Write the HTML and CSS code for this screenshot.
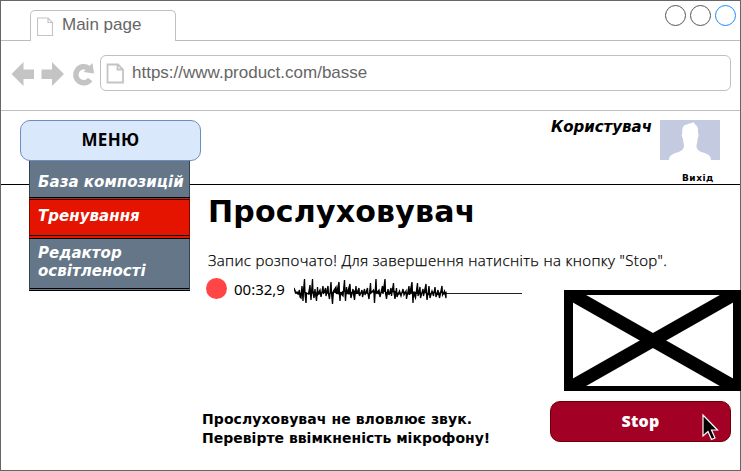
FILE: index.html
```html
<!DOCTYPE html>
<html lang="uk">
<head>
<meta charset="utf-8">
<title>Main page</title>
<link rel="stylesheet" href="styles.css">
</head>
<body>
<div class="window">
  <div class="tabs">
    <div class="tab">
      <svg class="tab-doc" width="17" height="20" viewBox="0 0 17 20"><path d="M.5 1h10.500l4.500 4.500V18.500H.5zM11 1v4.500H15.500" fill="none" stroke="#c4c4c4" stroke-width="1.100"/></svg>
      <span class="tab-title">Main page</span>
    </div>
    <div class="controls"><i class="dot"></i><i class="dot"></i><i class="dot blue"></i></div>
  </div>
  <div class="toolbar">
    <svg class="nav" width="84" height="26" viewBox="0 0 84 26"><g fill="#c4c4c4"><path d="M-.5 13L11.500 1V8.500H22V18H11.500V25z"/><path d="M52 13L40 1V8.500H29.500V18H40V25z"/></g><path d="M78.200 18.500A8 8 0 1 1 76.500 7.300" fill="none" stroke="#c4c4c4" stroke-width="5.500"/><path d="M80.500 2L82 12.500L71.500 11z" fill="#c4c4c4"/></svg>
    <div class="address">
      <svg width="19" height="22" viewBox="0 0 19 22"><path d="M1.500 1.500h10.500l5 5V19.500H1.500zM11.500 1.500v5H17" fill="none" stroke="#c4c4c4" stroke-width="1.800"/></svg>
      <span class="url">https://www.product.com/basse</span>
    </div>
  </div>
  <header class="header">
    <nav class="menu">
      <div class="menu-button"><span>МЕНЮ</span></div>
      <ul class="menu-list">
        <li class="item first"><span>База композицій</span></li>
        <li class="item active"><span>Тренування</span></li>
        <li class="item last"><span>Редактор<br>освітленості</span></li>
      </ul>
    </nav>
    <div class="user">Користувач</div>
    <div class="account">
      <svg width="60" height="40" viewBox="0 0 60 40"><path fill="#c4cbe0" d="M0 0h60v40H0z"/><path fill="#fff" d="M9 40C9 36 12 34 17 32.500C22 31 24 29 24 25.500C23.500 22 23 20 22.700 18C21.500 17 21.500 14 22.300 13C22 8 23 5 27 4.500C29 3 32 3 34 2.200L34.500 4C37 5 38.500 8 38 13C39 14 38.500 17 37.700 18C37.500 21 37 23 36.500 25.500C36.500 29 38 31 43 32.500C48 34 51 36 51 40z"/></svg>
      <a class="logout">Вихід</a>
    </div>
  </header>
  <main class="main">
    <h1 class="title"><span>Прослуховувач</span></h1>
    <p class="hint"><span>Запис розпочато! Для завершення натисніть на кнопку "Stop".</span></p>
    <section class="left">
      <div class="recorder">
        <i class="rec"></i>
        <span class="time">00:32,9</span>
        <svg class="wave" width="228" height="30" viewBox="0 0 228 30"><path d="M152 16.500h76" stroke="#222"/><path stroke="#000" stroke-width="1.300" d="M0 11L1.500 16L3 15L4 17L5.500 13L6 20L7 21L8 9L8.500 17L9 24L9.500 14L10.500 2L11 17L12 26L12.500 16L14.500 17L16 8L16.500 16L17 23L18.500 2L19 16L20 21L21 12L21.500 17L22.500 24L23.500 10L24 17L26 13L27 20L29 9L29.500 17L31.500 11L32 19L34 9L34.500 17L35.500 22L37 5L37.500 16L38.500 27L39.500 14L42 10L42.500 17L45 5L45.500 17L46 24L46.500 16L49 19L50.500 3L51 16L51.500 24L52.500 10L53 17L56 7L56.500 17L57 21L59 12L59.500 17L60.500 23L62 9L62.500 17L65 11L65.500 19L68 13L68.500 20L70.500 12L71 18L73.500 11L74 17L75 22L76.500 6L77 16L79.500 13L80 17L80.500 26L82 2L82.500 16L85 13L86 20L88.500 9L89 17L91 2L91.500 16L92.500 22L94 12L95 18L97 11L97.500 19L99.500 6L100 16L101 22L102.500 11L103 20L105.500 14L107 19L109 12L110 18L112 14L112.500 22L115 9L115.500 18L118 5L118.500 17L119 26L119.500 16L121.500 21L123.500 6L124 19L126 10L126.500 21L129 12L129.500 19L132 7L132.500 17L133 23L135 9L136 21L138 14L139.500 19L141 10L142 20L144 13L145.500 21L148 9L148.500 18L150.500 14L152 21V15.500L150 17L147 15L144 17.500L140 15L135 17.500L130 15L125 17L120 15L115 17L110 15L105 17L100 14L95 17L90 14L85 17L80 14L75 17L70 15L65 17L60 14L55 17L50 14L45 17L40 15L35 16.500L30 15L25 17L20 15L15 17L10 15L5 17L2 16z"/></svg>
      </div>
      <p class="warning"><span class="w1">Прослуховувач не вловлює звук.</span><br><span>Перевірте ввімкненість мікрофону!</span></p>
    </section>
    <section class="right">
      <svg class="placeholder" width="177" height="101" viewBox="0 0 177 101"><path fill-rule="evenodd" d="M0 0h177v101H0zM9 5v91h160V5z"/><path d="M9 5L169 96M169 5L9 96" stroke="#000" stroke-width="13"/></svg>
      <div class="stop"><span>Stop</span>
        <svg class="cursor" width="19" height="29" viewBox="0 0 19 29"><path d="M2 2V23L7 18.500L10.500 26.500L14 25L10.500 17H16.500z" fill="#000" stroke="#fff" stroke-width="1.200"/></svg>
      </div>
    </section>
  </main>
</div>
</body>
</html>
```
FILE: styles.css
```css
* { box-sizing: border-box; }
body { margin: 0; background: #fff; overflow: hidden; }
.window { width: 741px; height: 471px; border: 1px solid #666; font-family: "DejaVu Sans", sans-serif; color: #000; }
.window svg { display: block; flex: none; }
.window span, .user, .logout { white-space: nowrap; }
.tabs { height: 40px; display: flex; justify-content: space-between; padding: 9px 4px 0 29px; border-bottom: 1px solid #bcbcbc; }
.tab { width: 146px; height: 31px; border: 1px solid #c0c0c0; border-bottom: 0; border-radius: 5px 5px 0 0; background: #fff; display: flex; padding: 6px 0 0 6px; gap: 8px; }
.tab-title, .url { font: 17px/18px "Liberation Sans", sans-serif; color: #666; }
.tab-title { margin-top: -1px; }
.url { margin-top: 1px; }
.controls { display: flex; gap: 4px; margin-top: -5px; }
.dot { width: 21px; height: 21px; border: 1px solid #555; border-radius: 50%; }
.dot.blue { border-color: #1a8cff; }
.toolbar { height: 70px; display: flex; padding: 14px 9px 0 11px; border-bottom: 1px solid #c0c0c0; }
.nav { margin: 6px 4px 0 0; overflow: visible; }
.address { flex: 1; height: 36px; border: 1px solid #c0c0c0; border-radius: 6px; display: flex; padding: 7px 0 0 5px; gap: 7px; }
.header { position: relative; height: 74px; border-bottom: 1px solid #000; display: flex; justify-content: flex-end; padding-right: 20px; }
.menu { position: absolute; left: 19px; top: 9px; width: 181px; }
.menu-button { position: relative; z-index: 1; height: 41px; border: 1px solid #6c8ebf; border-radius: 10px; background: #dae8fc; text-align: center; font: bold 17px/38px "Open Sans", sans-serif; letter-spacing: .3px; }
.menu-list { list-style: none; margin: -1px 0 0 9px; padding: 0; width: 161px; font: italic bold 15px/18px "DejaVu Sans", sans-serif; letter-spacing: .05px; color: #fff; }
.item { border: 1px solid #314354; background: #647687; padding-left: 8px; }
.first { height: 37px; padding-top: 12px; border-bottom: 0; }
.active { height: 42px; padding-top: 7px; background: #e51400; border: 1px solid #7a0b00; border-top: 3px double #000; border-bottom: 4px double #000; }
.last { height: 52px; padding-top: 5px; border-top: 0; border-bottom: 3px double #000; }
.user { font: italic bold 15px/18px "DejaVu Sans", sans-serif; margin: 7px 8px 0 0; }
.account { width: 60px; padding-top: 9px; }
.logout { display: block; margin: 12px 0 0 22px; font: bold 9px/12px "DejaVu Sans", sans-serif; letter-spacing: .5px; }
.main { display: grid; grid-template-columns: 362px 177px; padding-left: 201px; width: 741px; }
.title, .hint { grid-column: 1 / 3; margin: 0; padding-left: 6px; }
.title { height: 65px; padding-top: 9px; font: bold 30px/36px "DejaVu Sans", sans-serif; letter-spacing: .2px; }
.hint { height: 27px; font: 300 15px/20px "Open Sans", sans-serif; letter-spacing: .36px; -webkit-text-stroke: .25px #000; }
.recorder { display: flex; height: 30px; padding-left: 4px; }
.rec { width: 21px; height: 21px; border-radius: 50%; background: #ff4545; margin-top: 1px; }
.time { width: 59px; margin-left: 7px; font: 15px/24px "Noto Sans", sans-serif; }
.wave { margin-left: 1px; }
.warning { margin: 103px 0 0; font: bold 14px/19px "DejaVu Sans", sans-serif; }
.w1 { letter-spacing: .07px; }
.right { padding-top: 13px; }
.stop { position: relative; width: 181px; height: 41px; margin: 10px 0 0 -14px; border: 1px solid #6f0000; border-radius: 10px; background: #a20025; color: #fff; text-align: center; font: 800 16px/38px "Open Sans", sans-serif; letter-spacing: .2px; }
.cursor { position: absolute; left: 150px; top: 11px; }
```
